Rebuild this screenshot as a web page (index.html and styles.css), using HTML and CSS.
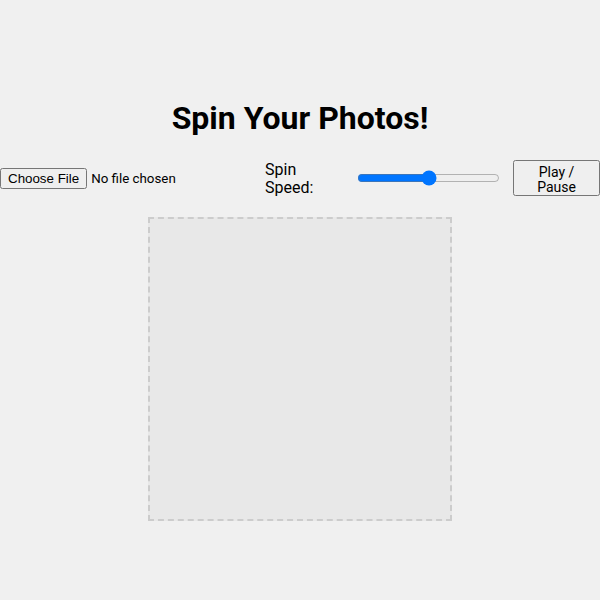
FILE: index.html
```html
<!DOCTYPE html>
<html>
<head>
<meta charset="utf-8">
<link rel="stylesheet" href="styles.css">
</head>
<body>
<div class="app">
  <h1 class="title">Spin Your Photos!</h1>
  <div class="controls">
    <input class="file" type="file" accept="image/*">
    <label class="speed-label" for="speed">Spin Speed:</label>
    <input class="speed" id="speed" type="range" min="0" max="100" value="50">
    <button class="play">Play / Pause</button>
  </div>
  <div class="stage"></div>
</div>
</body>
</html>
```
FILE: styles.css
```css
html, body {
  margin: 0;
  background: #f0f0f0;
  font-family: Roboto, "Liberation Sans", sans-serif;
}
.app {
  display: flex;
  flex-direction: column;
  align-items: center;
  padding-top: 99px;
}
.title {
  margin: 0;
  font-size: 32px;
  line-height: 38px;
  font-weight: 700;
  color: #000;
}
.controls {
  width: 600px;
  display: flex;
  align-items: center;
  margin-top: 23px;
  height: 36px;
}
.file {
  font-family: Roboto, sans-serif;
  font-size: 13.33px;
  width: 180px;
  margin: 0;
}
.speed-label {
  font-size: 16px;
  line-height: 18px;
  width: 50px;
  margin-left: 85px;
  padding-top: 2px;
}
.speed {
  width: 143px;
  margin: 0 0 0 42px;
}
.play {
  font-family: Roboto, sans-serif;
  font-size: 14px;
  line-height: 15px;
  width: 87px;
  height: 36px;
  margin-left: 13px;
  padding-top: 3px;
}
.stage {
  margin-top: 21px;
  width: 300px;
  height: 300px;
  background: #e8e8e8;
  border: 2px dashed #cccccc;
}
```
